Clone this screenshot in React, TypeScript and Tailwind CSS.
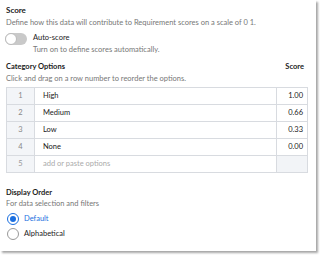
const rows = [
  { n: 1, label: "High", score: "1.00" },
  { n: 2, label: "Medium", score: "0.66" },
  { n: 3, label: "Low", score: "0.33" },
  { n: 4, label: "None", score: "0.00" },
];

export default function App() {
  return (
    <div className="w-[323px] h-[258px] bg-white font-['Lato',sans-serif] text-[#222]">
      <div className="w-[316px] h-[251px] bg-white shadow-[2px_2px_2px_rgba(0,0,0,0.35)] px-[6px] pt-[4px]">
        {/* score */}
        <div className="text-[8px] font-bold leading-[10px] mt-[1px]">Score</div>
        <div className="text-[7.5px] text-[#777] leading-[10px] mt-[3px]">
          Define how this data will contribute to Requirement scores on a scale of 0 1.
        </div>
        <div className="flex mt-[5px]">
          <div className="w-[22px] h-[12px] rounded-full bg-[#c9c9c9] relative -ml-[1px]">
            <div className="absolute left-0 top-0 w-[12px] h-[12px] rounded-full bg-white border border-[#bbb]" />
          </div>
          <div className="ml-[6px]">
            <div className="text-[7.5px] leading-[10px]">Auto-score</div>
            <div className="text-[7.5px] text-[#777] leading-[10px] mt-[2px]">Turn on to define scores automatically.</div>
          </div>
        </div>

        {/* category options */}
        <div className="flex justify-between mt-[7px] pr-[6px]">
          <div className="text-[7.5px] font-bold leading-[10px]">Category Options</div>
          <div className="text-[7.5px] font-bold leading-[10px]">Score</div>
        </div>
        <div className="text-[7.5px] text-[#777] leading-[10px] mt-[2px]">
          Click and drag on a row number to reorder the options.
        </div>
        <table className="mt-[3px] w-[302px] border-collapse text-[7.5px]">
          <tbody>
            {rows.map((r) => (
              <tr key={r.n} className="h-[17px]">
                <td className="w-[28px] border border-[#d8dbe0] bg-[#f3f5f8] text-center text-[#888]">{r.n}</td>
                <td className="border border-[#d8dbe0] pl-[8px]">{r.label}</td>
                <td className="w-[31px] border border-[#d8dbe0] text-right pr-[4px]">{r.score}</td>
              </tr>
            ))}
            <tr className="h-[17px]">
              <td className="w-[28px] border border-[#d8dbe0] bg-[#f3f5f8] text-center text-[#999]">5</td>
              <td className="border border-[#d8dbe0] pl-[8px] text-[#aaa]">add or paste options</td>
              <td className="w-[31px] border border-[#d8dbe0] bg-[#f2f4f7]"></td>
            </tr>
          </tbody>
        </table>

        {/* display order */}
        <div className="text-[7.5px] font-bold leading-[10px] mt-[15px]">Display Order</div>
        <div className="text-[7.5px] text-[#777] leading-[10px] mt-[1px]">For data selection and filters</div>
        <div className="flex items-center mt-[4px] ml-[1px]">
          <div className="w-[12px] h-[12px] rounded-full border-[1.5px] border-[#1b6fe0] flex items-center justify-center">
            <div className="w-[6px] h-[6px] rounded-full bg-[#1b6fe0]" />
          </div>
          <span className="ml-[5px] text-[7.5px] text-[#1b6fe0]">Default</span>
        </div>
        <div className="flex items-center mt-[3px] ml-[1px]">
          <div className="w-[12px] h-[12px] rounded-full border border-[#999]" />
          <span className="ml-[5px] text-[7.5px]">Alphabetical</span>
        </div>
      </div>
    </div>
  );
}
